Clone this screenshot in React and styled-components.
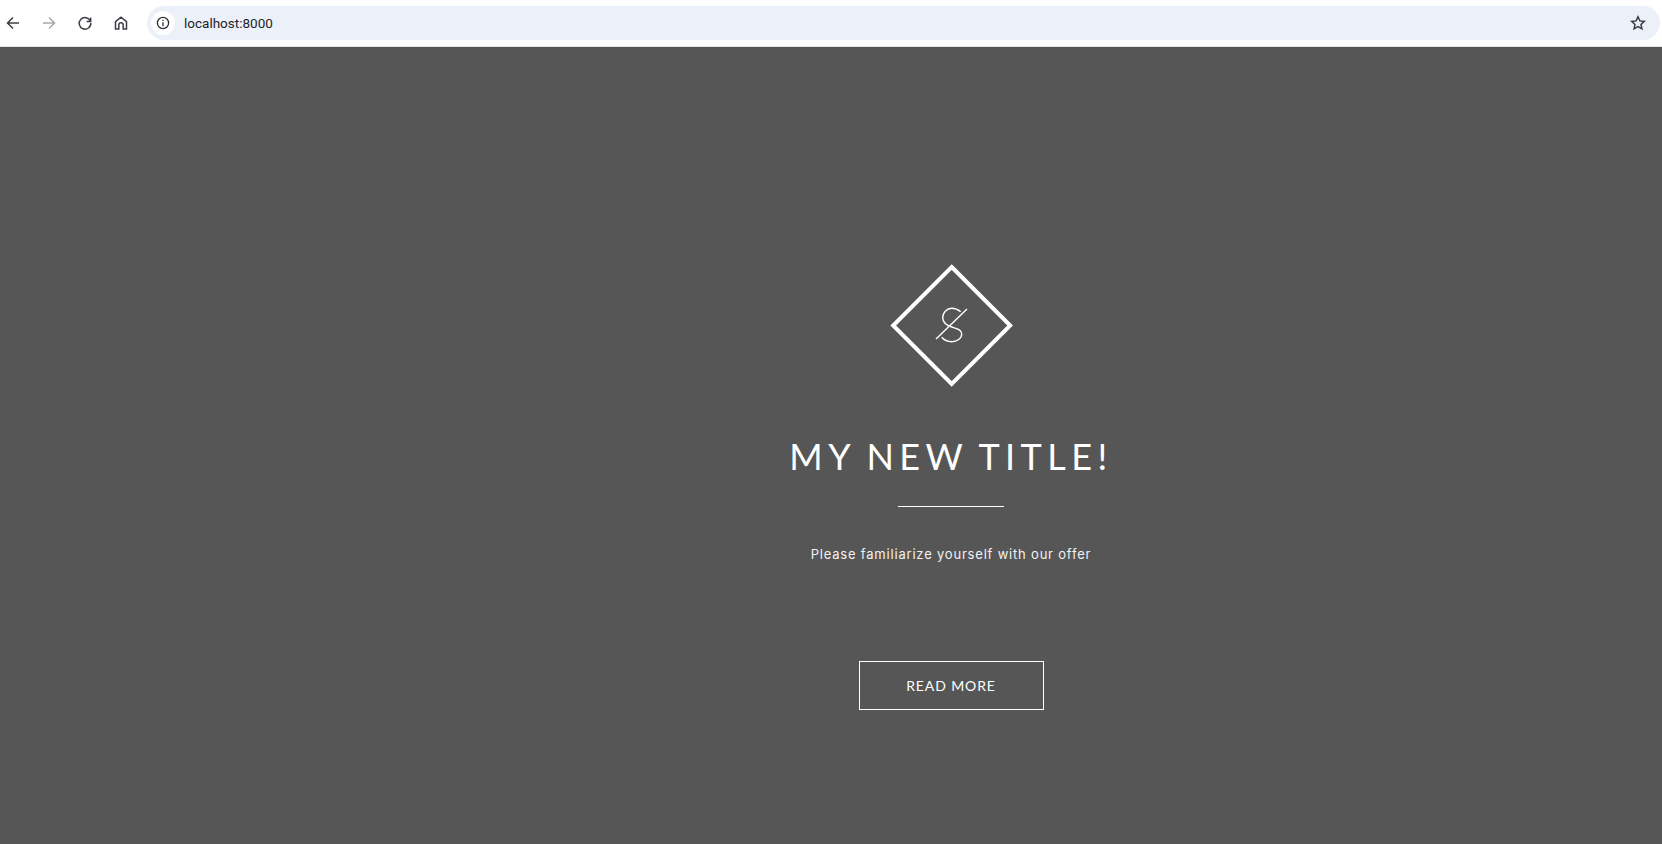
import React from 'react'
import styled, { createGlobalStyle } from 'styled-components'

const GlobalStyle = createGlobalStyle`
    html, body {
        margin: 0;
        padding: 0;
        height: 100%;
        overflow: hidden;
        background: #565656;
    }
`

const Page = styled.div`
    display: flex;
    flex-direction: column;
    height: 844px;
`

const Toolbar = styled.div`
    display: flex;
    align-items: center;
    height: 46px;
    flex-shrink: 0;
    background: #fff;
    border-bottom: 1px solid #e3e3e3;
    font-family: 'Roboto', 'Liberation Sans', sans-serif;
`

const NavButton = styled.div`
    display: flex;
    align-items: center;
    justify-content: center;
    width: 36px;
    height: 36px;
    flex-shrink: 0;
    color: ${props => (props.disabled ? '#a9a9a9' : '#3c3f43')};
`

const NavGroup = styled.div`
    display: flex;
    align-items: center;
    margin-left: -5px;
    width: 152px;
    flex-shrink: 0;
`

const AddressBar = styled.div`
    display: flex;
    align-items: center;
    flex: 1;
    height: 34px;
    margin-right: 2px;
    padding: 0 14px 0 4px;
    border-radius: 17px;
    background: #ebf0f9;
`

const InfoBadge = styled.div`
    display: flex;
    align-items: center;
    justify-content: center;
    width: 24px;
    height: 24px;
    border-radius: 50%;
    background: #fff;
    color: #2b2e31;
`

const Url = styled.span`
    flex: 1;
    margin-left: 9px;
    font-size: 13.5px;
    color: #1f2328;
`

const Star = styled.div`
    display: flex;
    color: #3c3f43;
`

const Hero = styled.main`
    flex: 1;
    display: flex;
    flex-direction: column;
    align-items: center;
    padding: 216px 0 0 240px;
    background: #565656;
    color: #fff;
`

const Logo = styled.svg`
    width: 124px;
    height: 124px;
    display: block;
`

const Title = styled.h1`
    margin: 47px 0 0;
    font-family: 'Lato', sans-serif;
    font-size: 36px;
    line-height: 44px;
    font-weight: 400;
    letter-spacing: 5.45px;
    word-spacing: -3px;
    white-space: nowrap;
`

const Divider = styled.div`
    width: 106px;
    height: 1px;
    margin-top: 28px;
    background: #fff;
`

const Subtitle = styled.p`
    margin: 38px 0 0;
    font-family: 'Inter', sans-serif;
    font-size: 13px;
    line-height: 18px;
    letter-spacing: 0.8px;
    color: #f2f2f2;
    white-space: nowrap;
`

const ReadMore = styled.a`
    display: flex;
    align-items: center;
    justify-content: center;
    width: 185px;
    height: 49px;
    margin-top: 98px;
    box-sizing: border-box;
    border: 1px solid #fff;
    font-family: 'Lato', sans-serif;
    font-size: 14px;
    letter-spacing: 0.9px;
    color: #fff;
`

const Icon = ({ children, size = 16, vb = 16, sw = 1.5 }) => (
    <svg width={size} height={size} viewBox={`0 0 ${vb} ${vb}`} fill="none" stroke="currentColor" strokeWidth={sw}>
        {children}
    </svg>
)

export default function App() {
    return (
        <Page>
            <GlobalStyle />
            <Toolbar>
                <NavGroup>
                    <NavButton>
                        <Icon><path d="M14 8H2.5M8 2.5 2.5 8 8 13.5" /></Icon>
                    </NavButton>
                    <NavButton disabled>
                        <Icon><path d="M2 8h11.5M8 2.5 13.5 8 8 13.5" /></Icon>
                    </NavButton>
                    <NavButton>
                        <Icon><path d="M13.4 6.2A5.8 5.8 0 1 0 13.8 8M13.7 2.4v4.1H9.6" /></Icon>
                    </NavButton>
                    <NavButton>
                        <Icon><path d="M2.5 14V6.7L8 2.2l5.5 4.5V14H10.2V10a2.2 2.2 0 0 0-4.4 0V14Z" /></Icon>
                    </NavButton>
                </NavGroup>
                <AddressBar>
                    <InfoBadge>
                        <Icon size={14} vb={14} sw={1.3}>
                            <circle cx="7" cy="7" r="5.6" />
                            <path d="M7 6.2v4M7 3.7v1.3" />
                        </Icon>
                    </InfoBadge>
                    <Url>localhost:8000</Url>
                    <Star>
                        <Icon>
                            <path d="m8 1.8 1.9 4.1 4.4.5-3.3 3 .9 4.4L8 11.6l-3.9 2.2.9-4.4-3.3-3 4.4-.5Z" />
                        </Icon>
                    </Star>
                </AddressBar>
            </Toolbar>
            <Hero>
                <Logo viewBox="0 0 124 124" fill="none" stroke="#fff">
                    <path d="M62.7 4 121.2 62.5 62.7 121 4.2 62.5Z" strokeWidth="4" />
                    <path d="M71.7 48.7C69 46.5 66 45.3 62.7 45.3 57.5 45.3 53.7 50 53.7 54.5 53.7 60 58 62.5 62.7 64 68 65.7 72.7 66.5 72.7 71 72.7 75.5 68 78.7 62.7 78.7 58.5 78.7 55 77 52.7 74.3" strokeWidth="1.4" />
                    <path d="M47 76 78 46" strokeWidth="1.4" />
                </Logo>
                <Title>MY NEW TITLE!</Title>
                <Divider />
                <Subtitle>Please familiarize yourself with our offer</Subtitle>
                <ReadMore>READ MORE</ReadMore>
            </Hero>
        </Page>
    )
}
